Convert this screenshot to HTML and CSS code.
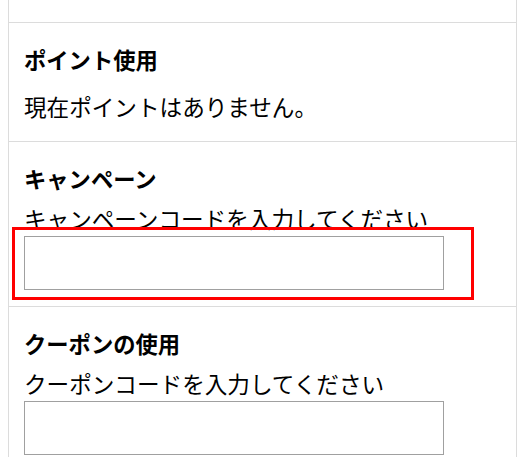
FILE: index.html
```html
<!DOCTYPE html>
<html lang="ja">
<head>
<meta charset="UTF-8">
<meta name="viewport" content="width=device-width, initial-scale=1.0">
<title>お支払い</title>
<link rel="stylesheet" href="styles.css">
</head>
<body>
  <div class="panel">
    <!-- previous block, scrolled out of view -->
    <div class="section section-top"></div>

    <div class="section section-points">
      <h3 class="section-title">ポイント使用</h3>
      <p class="section-note">現在ポイントはありません。</p>
    </div>

    <div class="section">
      <h3 class="section-title">キャンペーン</h3>
      <label class="field-label" for="campaignCode">キャンペーンコードを入力してください</label>
      <div class="field highlight">
        <input type="text" class="code-input" id="campaignCode">
      </div>
    </div>

    <div class="section">
      <h3 class="section-title">クーポンの使用</h3>
      <label class="field-label" for="couponCode">クーポンコードを入力してください</label>
      <div class="field">
        <input type="text" class="code-input" id="couponCode">
      </div>
    </div>
  </div>
</body>
</html>
```

FILE: styles.css
```css
body {
  margin: 0;
  background: #fff;
  color: #000;
  font-family: "Noto Sans CJK JP", "Noto Sans", sans-serif;
  font-size: 22.6px;
  line-height: 33px;
}
.panel {
  width: 507px;
  margin-left: 8px;
  border-left: 1px solid #dcdcdc;
  border-right: 1px solid #dcdcdc;
}
.section {
  border-top: 1px solid #dcdcdc;
  padding: 20px 15px 16px;
}
.section-top {
  border-top: none;
  height: 22px;
  padding: 0;
}
.section-points {
  padding-bottom: 18px;
}
.section-title {
  margin: 0 0 7px;
  font-size: 22.3px;
  font-weight: bold;
  line-height: 33px;
}
.section-note {
  margin: 14px 0 0;
}
.field-label {
  display: block;
}
.field {
  margin-top: 1px;
}
.code-input {
  display: block;
  box-sizing: border-box;
  width: 420px;
  height: 54px;
  margin: 0;
  border: 1px solid #a0a0a0;
  border-radius: 0;
  padding: 0 10px;
  font-size: 22px;
  font-family: inherit;
}
.highlight {
  position: relative;
}
/* red annotation frame round the campaign input */
.highlight::after {
  content: "";
  position: absolute;
  top: -9px;
  left: -12px;
  width: 456px;
  height: 67px;
  border: 3px solid #f00;
}
```
